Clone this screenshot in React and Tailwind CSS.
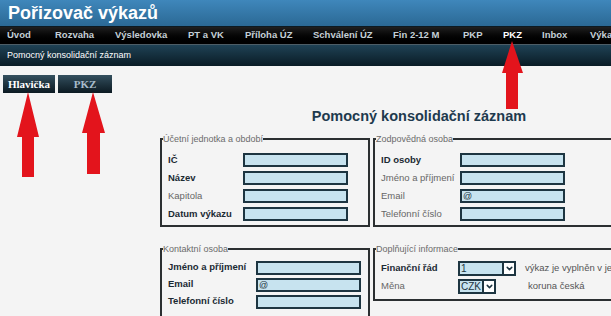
import { ChevronDown } from "lucide-react";

const navItems = [
  { label: "Úvod", w: "w-[48px]" },
  { label: "Rozvaha", w: "w-[60px]" },
  { label: "Výsledovka", w: "w-[73px]" },
  { label: "PT a VK", w: "w-[57px]" },
  { label: "Příloha ÚZ", w: "w-[68px]" },
  { label: "Schválení ÚZ", w: "w-[80px]" },
  { label: "Fin 2-12 M", w: "w-[70px]" },
  { label: "PKP", w: "w-[40px]" },
  { label: "PKZ", w: "w-[39px]", active: true },
  { label: "Inbox", w: "w-[48px]" },
  { label: "Výkazy", w: "w-[60px]" },
];

const Box = ({ children }) => (
  <div className="w-[105px] h-[14px] border-2 border-[#1d3541] bg-[#c7e3ef] text-[9px] leading-[10px] text-[#1d3541] pl-[1px]">
    {children}
  </div>
);

const Row = ({ label, bold, col, h = "h-[18px]", children }) => (
  <div className={`flex items-center ${h}`}>
    <div
      className={`${col} shrink-0 text-[9.5px] whitespace-nowrap ${
        bold ? "font-bold text-[#1b2a33]" : "text-[#666]"
      }`}
    >
      {label}
    </div>
    {children}
  </div>
);

const Group = ({ legend, className = "", children }) => (
  <fieldset className={`border-2 border-[#2b2f31] pl-[6px] ${className}`}>
    <legend className="-ml-[5px] px-0 text-[9px] leading-[12px] text-[#6b6b6b]">{legend}</legend>
    {children}
  </fieldset>
);

const Select = ({ value, w, textW }) => (
  <div className={`flex h-[15px] ${w} border-2 border-[#1d3541] bg-white`}>
    <div className={`${textW} bg-[#c7e3ef] text-[10px] leading-[11px] text-[#1d3541] pl-[1px]`}>{value}</div>
    <div className="flex-1" />
    <div className="w-[12px] border-l-2 border-[#1d3541] flex items-center justify-center">
      <ChevronDown className="w-[9px] h-[9px] text-[#1d3541]" strokeWidth={4} />
    </div>
  </div>
);

export default function App() {
  return (
    <div className="relative w-[611px] h-[316px] overflow-hidden bg-[#f4f4f4] font-['Liberation_Sans',sans-serif]">
      {/* title bar */}
      <div className="h-[27px] bg-gradient-to-b from-[#3f87bb] to-[#2b6995] border-b border-[#0c1a22] pl-[8px] flex items-center">
        <h1 className="text-[18px] font-bold text-white leading-none">Pořizovač výkazů</h1>
      </div>

      {/* main nav */}
      <div className="h-[17px] bg-gradient-to-b from-[#202020] to-[#000] flex items-center pl-[7px] whitespace-nowrap">
        {navItems.map((item) => (
          <div
            key={item.label}
            className={`${item.w} shrink-0 text-[9.5px] font-bold ${
              item.active ? "text-white" : "text-[#c5d0d7]"
            }`}
          >
            {item.label}
          </div>
        ))}
      </div>

      {/* sub bar */}
      <div className="h-[22px] bg-gradient-to-b from-[#1f4255] to-[#0a1c26] border-t border-[#4d5d66] flex items-center pl-[7px]">
        <span className="text-[9px] text-white">Pomocný konsolidační záznam</span>
      </div>

      <div className="flex">
        {/* tabs */}
        <div className="w-[160px] shrink-0 pt-[9px] pl-[3px] flex gap-[3px] items-start">
          <div className="w-[52px] h-[18px] bg-gradient-to-b from-[#34505f] to-[#0c1a22] flex items-center justify-center font-['Liberation_Serif',serif] font-bold text-[11px] text-white">
            Hlavička
          </div>
          <div className="w-[54px] h-[18px] bg-gradient-to-b from-[#34505f] to-[#0c1a22] flex items-center justify-center font-['Liberation_Serif',serif] font-bold text-[11px] text-[#a8bccb]">
            PKZ
          </div>
        </div>

        {/* form */}
        <div className="w-[518px] shrink-0">
          <h2 className="mt-[41px] text-center text-[14.5px] leading-[18px] font-bold text-[#1e3a4e]">
            Pomocný konsolidační záznam
          </h2>

          <div className="mt-[8px] grid grid-cols-[210px_300px] gap-x-[3px] gap-y-[16px] items-start">
            <Group legend="Účetní jednotka a období" className="pt-[6px] pb-[2px]">
              <Row label="IČ" bold col="w-[75px]"><Box /></Row>
              <Row label="Název" bold col="w-[75px]"><Box /></Row>
              <Row label="Kapitola" col="w-[75px]"><Box /></Row>
              <Row label="Datum výkazu" bold col="w-[75px]"><Box /></Row>
            </Group>

            <Group legend="Zodpovědná osoba" className="pt-[6px] pb-[2px]">
              <Row label="ID osoby" bold col="w-[79px]"><Box /></Row>
              <Row label="Jméno a příjmení" col="w-[79px]"><Box /></Row>
              <Row label="Email" col="w-[79px]"><Box>@</Box></Row>
              <Row label="Telefonní číslo" col="w-[79px]"><Box /></Row>
            </Group>

            <Group legend="Kontaktní osoba" className="pt-[4px] pb-[6px]">
              <Row label="Jméno a příjmení" bold col="w-[88px]" h="h-[17px]"><Box /></Row>
              <Row label="Email" bold col="w-[88px]" h="h-[17px]"><Box>@</Box></Row>
              <Row label="Telefonní číslo" bold col="w-[88px]" h="h-[17px]"><Box /></Row>
            </Group>

            <Group legend="Doplňující informace" className="pt-[4px] pb-[4px]">
              <Row label="Finanční řád" bold col="w-[77px]">
                <Select value="1" w="w-[58px]" textW="w-[42px]" />
                <span className="ml-[9px] text-[9.5px] text-[#555] whitespace-nowrap">
                  výkaz je vyplněn v jednotkách
                </span>
              </Row>
              <Row label="Měna" col="w-[77px]">
                <Select value="CZK" w="w-[38px]" textW="w-[22px]" />
                <span className="ml-[32px] text-[9.5px] text-[#555] whitespace-nowrap">koruna česká</span>
              </Row>
            </Group>
          </div>
        </div>
      </div>

      {/* red annotation arrows */}
      <svg className="absolute inset-0 pointer-events-none" width="611" height="316" viewBox="0 0 611 316">
        <g fill="#e3141c">
          <polygon points="28,92 39,137 34,137 34,177 22,177 22,137 17,137" />
          <polygon points="93,92 105,133 100,133 100,174 87,174 87,133 82,133" />
          <polygon points="512,41 523,73 518,73 518,109 506,109 506,73 502,73" />
        </g>
      </svg>
    </div>
  );
}
